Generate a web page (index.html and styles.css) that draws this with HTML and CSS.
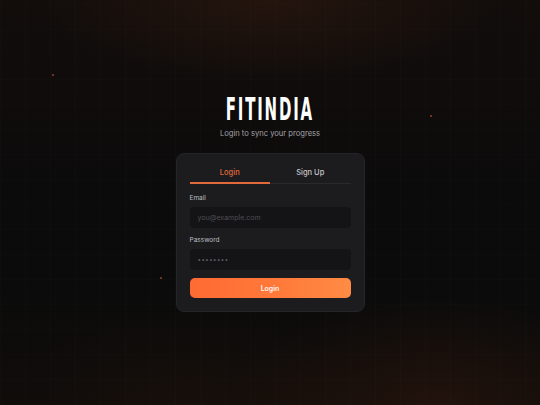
FILE: index.html
```html
<!DOCTYPE html>
<html lang="en">
<head>
<meta charset="utf-8">
<title>FITINDIA – Login</title>
<link rel="stylesheet" href="styles.css">
</head>
<body>
<div class="bg">
  <span class="dot dot-a"></span>
  <span class="dot dot-b"></span>
  <span class="dot dot-c"></span>
  <main class="auth">
    <h1 class="brand">FITINDIA</h1>
    <p class="tagline">Login to sync your progress</p>
    <section class="card">
      <div class="tabs">
        <button class="tab tab-active">Login</button>
        <button class="tab">Sign Up</button>
      </div>
      <form class="form">
        <label class="label" for="email">Email</label>
        <input class="input" id="email" type="email" placeholder="you@example.com">
        <label class="label" for="pw">Password</label>
        <input class="input" id="pw" type="password" placeholder="••••••••">
        <button class="submit" type="button">Login</button>
      </form>
    </section>
  </main>
</div>
</body>
</html>
```

FILE: styles.css
```css
* { box-sizing: border-box; }
html, body { margin: 0; padding: 0; }
body {
  width: 540px;
  height: 405px;
  overflow: hidden;
  font-family: Inter, "Noto Sans", sans-serif;
  background: #0b0b0c;
}
.bg {
  position: relative;
  width: 540px;
  height: 405px;
  background:
    repeating-linear-gradient(90deg, rgba(255,255,255,0.012) 0 1px, transparent 1px 25px),
    repeating-linear-gradient(0deg, rgba(255,255,255,0.008) 0 1px, transparent 1px 25px),
    radial-gradient(ellipse 60% 30% at 50% 0%, rgba(70,35,18,0.35), transparent 70%),
    radial-gradient(ellipse 50% 35% at 80% 100%, rgba(60,28,14,0.4), transparent 75%),
    radial-gradient(ellipse 45% 30% at 35% 100%, rgba(40,22,12,0.3), transparent 75%),
    linear-gradient(180deg, #120d0b 0%, #0c0b0b 45%, #0b0b0b 70%, #100c0a 100%);
  display: flex;
  justify-content: center;
}
.dot {
  position: absolute;
  width: 2px;
  height: 2px;
  border-radius: 50%;
  background: rgba(255,110,60,0.55);
}
.dot-a { left: 52px; top: 74px; }
.dot-b { left: 430px; top: 115px; }
.dot-c { left: 160px; top: 277px; }

.auth {
  width: 189px;
  display: flex;
  flex-direction: column;
  align-items: center;
  padding-top: 92px;
}
.brand {
  margin: 0;
  font-family: "DejaVu Sans Condensed", "DejaVu Sans", sans-serif;
  font-weight: 700;
  font-size: 32px;
  line-height: 34px;
  letter-spacing: 3.5px;
  color: #ffffff;
  transform: scaleX(0.52);
}
.tagline {
  margin: 2px 0 0;
  font-size: 7.6px;
  line-height: 12px;
  color: #a3a3a6;
}
.card {
  margin-top: 13px;
  width: 189px;
  background: #1c1c1e;
  border: 1px solid #252527;
  border-radius: 8px;
  padding: 7px 13px 13px;
}
.tabs {
  display: flex;
  border-bottom: 1px solid #2a2a2c;
}
.tab {
  flex: 1;
  background: none;
  border: 0;
  padding: 7px 0 4px;
  margin-bottom: -1px;
  font-family: inherit;
  font-size: 7.5px;
  font-weight: 500;
  line-height: 10px;
  color: #c6c6c9;
  border-bottom: 2px solid transparent;
}
.tab-active {
  color: #e2693c;
  border-bottom-color: #e2693c;
}
.form {
  display: flex;
  flex-direction: column;
  padding-top: 10px;
}
.label {
  font-size: 6.5px;
  line-height: 9px;
  color: #bdbdc0;
  margin-bottom: 4px;
}
.input {
  height: 21px;
  border: 0;
  border-radius: 4px;
  background: #141416;
  padding: 0 8px;
  margin-bottom: 8px;
  font-family: inherit;
  font-size: 7px;
  color: #d0d0d0;
  outline: none;
}
.input::placeholder { color: #4d4d52; }
#pw::placeholder { color: #6a6a70; letter-spacing: 0.5px; font-size: 6px; }
.submit {
  height: 20px;
  border: 0;
  border-radius: 5px;
  background: linear-gradient(90deg, #ff6a33 0%, #ff7a3a 55%, #ff8b44 100%);
  font-family: inherit;
  font-size: 7px;
  font-weight: 600;
  color: #fff6f0;
}
```
